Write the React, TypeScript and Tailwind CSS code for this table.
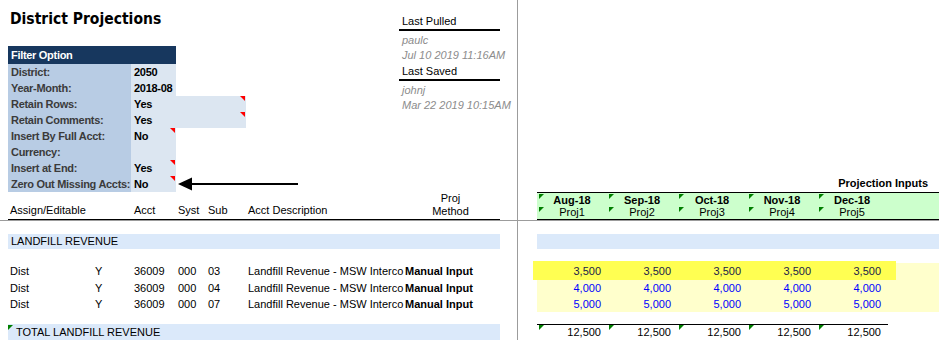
import React from "react"

const tahoma = "font-['Tahoma','DejaVu_Sans_Condensed','DejaVu_Sans',sans-serif]"
const arial = "font-['Liberation_Sans',Arial,sans-serif]"

const months = ["Aug-18", "Sep-18", "Oct-18", "Nov-18", "Dec-18"]

const filters = [
  { label: "District:", value: "2050", wide: false, flag: false },
  { label: "Year-Month:", value: "2018-08", wide: false, flag: false },
  { label: "Retain Rows:", value: "Yes", wide: true, flag: true },
  { label: "Retain Comments:", value: "Yes", wide: true, flag: true },
  { label: "Insert By Full Acct:", value: "No", wide: false, flag: true },
  { label: "Currency:", value: "", wide: false, flag: false },
  { label: "Insert at End:", value: "Yes", wide: false, flag: true },
  { label: "Zero Out Missing Accts:", value: "No", wide: false, flag: true },
]

const rows = [
  { sub: "03", value: "3,500" },
  { sub: "04", value: "4,000" },
  { sub: "07", value: "5,000" },
]

function RedFlag() {
  return <span className="absolute right-[1px] top-0 h-0 w-0 border-t-[5px] border-l-[5px] border-t-[#ff0000] border-l-transparent" />
}

function GreenFlag({ top = "top-[1px]" }: { top?: string }) {
  return <span className={`absolute left-[2px] ${top} h-0 w-0 border-t-[5px] border-r-[5px] border-t-[#008000] border-r-transparent`} />
}

function Row({ h, left, right }: { h: string; left?: React.ReactNode; right?: React.ReactNode }) {
  return (
    <div className={`flex ${h}`}>
      <div className="flex w-[518px] shrink-0 border-r border-[#9c9c9c] pl-2">{left}</div>
      <div className="flex flex-1">{right}</div>
    </div>
  )
}

function LeftCells({ cells, bold }: { cells: string[]; bold?: boolean }) {
  const widths = ["w-[85px]", "w-[39px]", "w-[44px]", "w-[30px]", "w-[40px]", "w-[155px]"]
  return (
    <div className="flex items-center text-[11px] text-black">
      {cells.map((c, i) => (
        <div key={i} className={`${widths[i]} shrink-0 whitespace-nowrap pl-[2px]`}>{c}</div>
      ))}
      {bold && <div className="w-[99px] whitespace-nowrap pl-[4px] font-bold">Manual Input</div>}
    </div>
  )
}

export default function App() {
  return (
    <div className={`relative h-[347px] w-[939px] overflow-hidden bg-white ${arial}`}>
      {/* top area */}
      <Row
        h="h-[192px]"
        left={
          <div className="flex">
            <div className="w-[391px]">
              <h1 className={`${tahoma} pl-[2px] pt-[9px] text-[15.5px] font-bold leading-[21px] text-black`}>
                District Projections
              </h1>
              <div className="mt-[16px] text-[11px] font-bold tracking-[-0.3px]">
                <div className="flex h-[18px] w-[168px] items-center bg-[#17375e] pl-[3px] text-white">Filter Option</div>
                {filters.map((f) => (
                  <div key={f.label} className="flex h-4">
                    <div className="flex w-[123px] shrink-0 items-center whitespace-nowrap bg-[#b8cce4] pl-[3px] text-[#3b3b3b]">{f.label}</div>
                    <div className={`relative flex shrink-0 items-center whitespace-nowrap bg-[#dce6f1] pl-[3px] text-black ${f.wide ? "w-[115px]" : "w-[45px]"}`}>
                      {f.value}
                      {f.flag && <RedFlag />}
                    </div>
                  </div>
                ))}
              </div>
            </div>
            <div className="w-[101px] pt-[13px] text-[11px]">
              <div className="h-[18px] border-b-2 border-black pl-[3px] leading-[16px] text-black">Last Pulled</div>
              <div className="h-4 pl-[3px] pt-[1px] leading-[16px] italic text-[#8c8c8c]">paulc</div>
              <div className="h-4 whitespace-nowrap pl-[3px] leading-[16px] italic text-[#8c8c8c]">Jul 10 2019 11:16AM</div>
              <div className="h-[18px] border-b-2 border-black pl-[3px] leading-[16px] text-black">Last Saved</div>
              <div className="h-4 pl-[3px] pt-[1px] leading-[16px] italic text-[#8c8c8c]">johnj</div>
              <div className="h-4 whitespace-nowrap pl-[3px] leading-[16px] italic text-[#8c8c8c]">Mar 22 2019 10:15AM</div>
            </div>
          </div>
        }
        right={
          <div className="flex flex-1 items-end justify-end pb-[1px] pr-[11px] text-[11px] font-bold text-black">
            Projection Inputs
          </div>
        }
      />

      {/* column headers */}
      <div className="border-b border-[#9c9c9c]">
        <Row
          h="h-[28px]"
          left={
            <div className="flex w-[492px] items-end border-b border-black pb-[1px]">
              <LeftCells cells={["Assign/Editable", "", "Acct", "Syst", "Sub", "Acct Description"]} />
              <div className="w-[99px] text-center text-[11px] leading-[13px] text-black">
                Proj
                <br />
                Method
              </div>
            </div>
          }
          right={
            <div className="ml-[19px] flex flex-1 border-y border-black bg-[#ccffcc] text-[11px] text-black">
              {months.map((m, i) => (
                <div key={m} className="relative w-[70px] text-center">
                  <GreenFlag />
                  <span className="absolute left-[2px] top-[14px] h-0 w-0 border-t-[5px] border-r-[5px] border-t-[#008000] border-r-transparent" />
                  <div className="h-[13px] pt-[1px] font-bold leading-[13px]">{m}</div>
                  <div className="leading-[13px]">Proj{i + 1}</div>
                </div>
              ))}
            </div>
          }
        />
      </div>

      <Row h="h-[13px]" />
      <Row
        h="h-[15px]"
        left={<div className="flex w-[492px] items-center bg-[#dbe9fa] pl-[3px] text-[11px] text-black">LANDFILL REVENUE</div>}
        right={<div className="ml-[19px] flex-1 bg-[#dbe9fa]" />}
      />
      <Row h="h-[12px]" />

      {rows.map((r, ri) => (
        <Row
          key={r.sub}
          h={ri === 0 ? "h-[19px]" : "h-4"}
          left={
            <div className={`flex ${ri === 0 ? "pt-[2px]" : ""}`}>
              <LeftCells cells={["Dist", " Y", "36009", "000", r.sub, "Landfill Revenue - MSW Interco"]} bold />
            </div>
          }
          right={
            ri === 0 ? (
              <div className="ml-[15px] flex flex-1">
                <div className="flex w-[363px] items-center bg-[#ffff52] pl-[4px] pt-[2px]">
                  {months.map((m) => (
                    <div key={m} className="w-[70px] pr-[6px] text-right text-[11px] text-[#1a1a4a]">{r.value}</div>
                  ))}
                </div>
                <div className="mt-[2px] flex-1 bg-[#ffffcc]" />
              </div>
            ) : (
              <div className="ml-[19px] flex flex-1 items-center bg-[#ffffcc]">
                {months.map((m) => (
                  <div key={m} className="w-[70px] pr-[6px] text-right text-[11px] text-[#0000ff]">{r.value}</div>
                ))}
              </div>
            )
          }
        />
      ))}

      <Row h="h-[12px]" />
      <Row
        h="h-[16px]"
        left={
          <div className="relative flex w-[492px] items-center bg-[#dbe9fa] pl-[8px] text-[11px] text-black">
            <span className="absolute left-0 top-[1px] h-0 w-0 border-t-[5px] border-r-[5px] border-t-[#008000] border-r-transparent" />
            TOTAL LANDFILL REVENUE
          </div>
        }
        right={
          <div className="ml-[19px] flex w-[351px] border-t border-black">
            {months.map((m) => (
              <div key={m} className="relative flex w-[70px] items-center justify-end pr-[6px] text-[11px] text-black">
                <GreenFlag top="top-0" />
                12,500
              </div>
            ))}
          </div>
        }
      />

      {/* annotation arrow */}
      <svg className="absolute left-[176px] top-[176px]" width="126" height="16" viewBox="0 0 126 16">
        <line x1="12" y1="8" x2="122" y2="8" stroke="black" strokeWidth="2" />
        <polygon points="2,8 16,1.5 16,14.5" fill="black" />
      </svg>
    </div>
  )
}
